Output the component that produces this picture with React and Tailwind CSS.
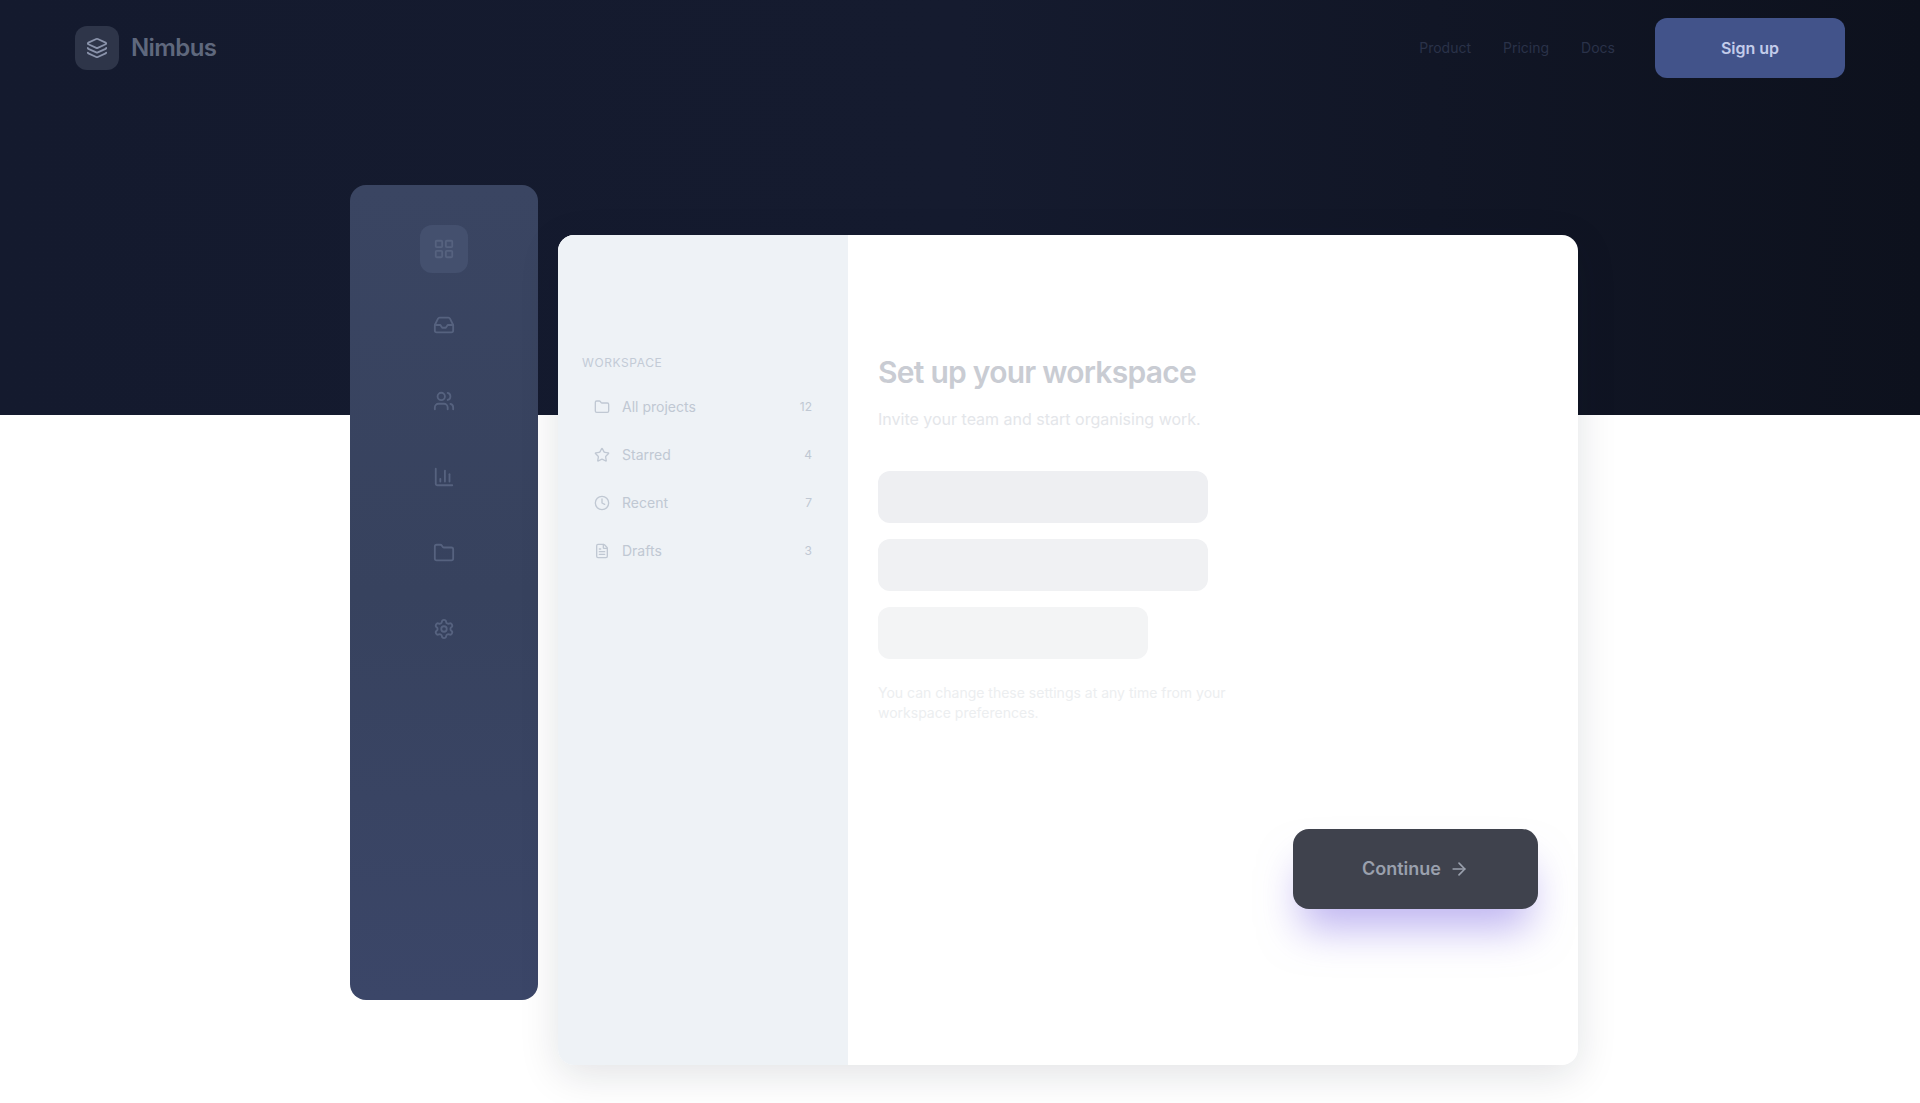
import { Layers, LayoutGrid, Inbox, Users, BarChart3, Settings, Folder, FileText, Star, Clock, ArrowRight } from 'lucide-react'

// Left rail items
const RAIL = [LayoutGrid, Inbox, Users, BarChart3, Folder, Settings]

const PROJECTS = [
  { icon: Folder, label: 'All projects', count: 12 },
  { icon: Star, label: 'Starred', count: 4 },
  { icon: Clock, label: 'Recent', count: 7 },
  { icon: FileText, label: 'Drafts', count: 3 },
]

export default function App() {
  return (
    <div className="min-h-screen bg-white font-['Inter','Liberation_Sans',sans-serif]">
      {/* Dark hero band */}
      <div className="h-[415px] bg-gradient-to-r from-[#141a2e] via-[#151b2f] to-[#0d111d]">
        <nav className="flex items-center justify-between px-[75px] h-[96px]">
          <div className="flex items-center gap-3">
            <div className="w-11 h-11 rounded-xl bg-[#2e3549] flex items-center justify-center">
              <Layers size={22} className="text-[#8a93ab]" />
            </div>
            <span className="text-[24px] font-semibold text-[#5f687d] tracking-tight">Nimbus</span>
          </div>
          <div className="flex items-center gap-10">
            <div className="flex items-center gap-8 text-sm text-[#2a3249]">
              <span>Product</span>
              <span>Pricing</span>
              <span>Docs</span>
            </div>
            <button className="w-[190px] h-[60px] rounded-xl bg-[#42538a] text-[#c3ccea] text-base font-semibold">
              Sign up
            </button>
          </div>
        </nav>
      </div>

      {/* App preview */}
      <main className="-mt-[230px] flex items-start gap-5 pl-[350px] pb-10">
        {/* Rail */}
        <aside className="w-[188px] h-[815px] rounded-2xl bg-gradient-to-b from-[#3a4562] via-[#37425e] to-[#3b4668] flex flex-col items-center pt-10 gap-7">
          {RAIL.map((Icon, i) => (
            <div
              key={i}
              className={`w-12 h-12 rounded-xl flex items-center justify-center ${
                i === 0 ? 'bg-[#44506e]' : ''
              }`}
            >
              <Icon size={22} className="text-[#56627f]" />
            </div>
          ))}
        </aside>

        {/* Card */}
        <section className="mt-[50px] w-[1020px] h-[830px] rounded-2xl bg-white shadow-[0_10px_40px_rgba(15,23,42,0.12)] flex overflow-hidden">
          <div className="w-[290px] bg-[#eef2f6] px-6 pt-[120px] flex flex-col gap-2">
            <div className="text-xs uppercase tracking-wider text-[#c3cbd6] mb-2">Workspace</div>
            {PROJECTS.map(({ icon: Icon, label, count }) => (
              <div key={label} className="flex items-center justify-between h-10 px-3 rounded-lg text-sm text-[#c0c8d3]">
                <span className="flex items-center gap-3">
                  <Icon size={16} />
                  {label}
                </span>
                <span className="text-xs">{count}</span>
              </div>
            ))}
          </div>

          <div className="flex-1 flex flex-col pl-[30px] pr-10 pt-[115px] pb-[156px]">
            <h1 className="text-[30px] font-semibold text-[#c9ccd3] tracking-tight">Set up your workspace</h1>
            <p className="mt-3 text-base text-[#e4e6ea] max-w-[340px]">
              Invite your team and start organising work.
            </p>

            <div className="mt-10 flex flex-col gap-4 w-[330px]">
              <div className="h-[52px] rounded-xl bg-[#eeeff2]" />
              <div className="h-[52px] rounded-xl bg-[#f0f1f3]" />
              <div className="h-[52px] w-[270px] rounded-xl bg-[#f3f4f5]" />
            </div>
            <p className="mt-6 text-sm text-[#eceef0] w-[360px]">
              You can change these settings at any time from your workspace preferences.
            </p>

            <div className="mt-auto flex justify-end">
              <button className="w-[245px] h-[80px] rounded-2xl bg-[#3f424d] text-[#9aa0ad] text-lg font-semibold flex items-center justify-center gap-2 shadow-[0_28px_40px_-8px_rgba(139,120,230,0.55)]">
                Continue
                <ArrowRight size={20} />
              </button>
            </div>
          </div>
        </section>
      </main>
    </div>
  )
}
